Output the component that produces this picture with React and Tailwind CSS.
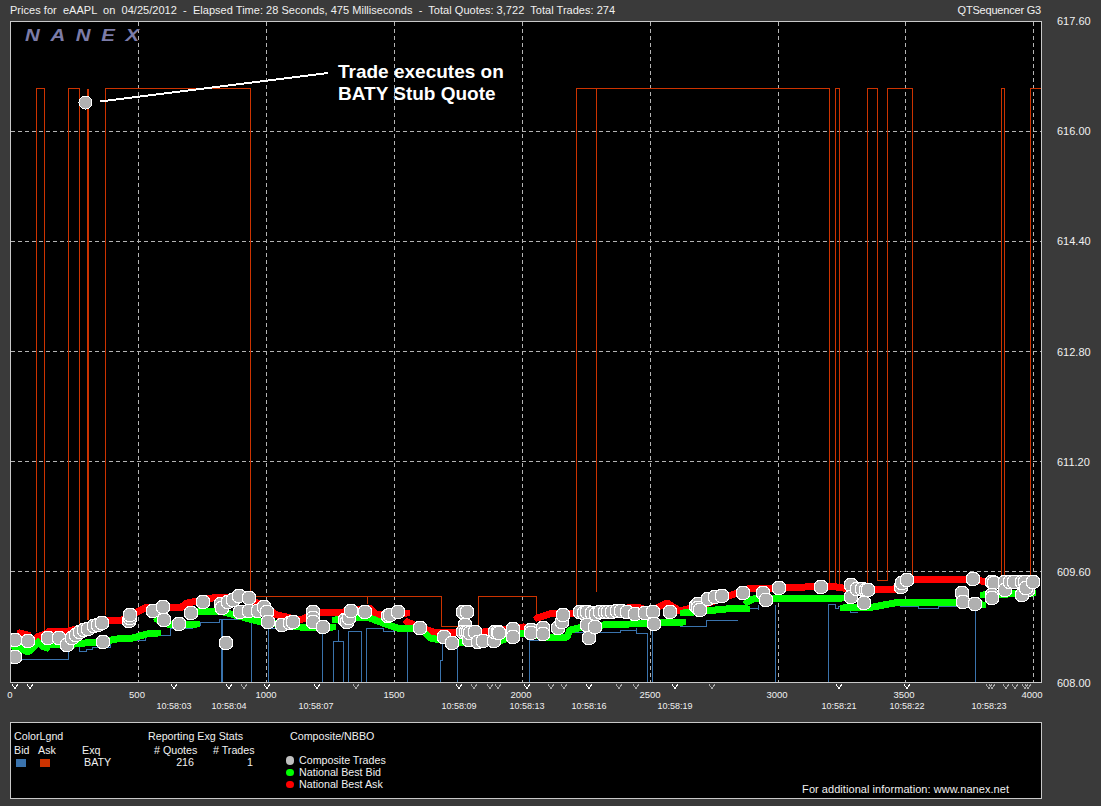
const font = { fontFamily: '"Liberation Sans", Arial, sans-serif' };

const M = (pts) => pts.map((p, i) => (i ? "L" : "M") + p[0] + " " + p[1]).join(" ");

const GRIDX = [138, 266, 394, 522, 650, 778, 905, 1033];
const GRIDY = [131, 241, 351, 461, 571];
const YLABELS = ["617.60", "616.00", "614.40", "612.80", "611.20", "609.60", "608.00"];
const XLABELS = [[0, 10], [500, 137], [1000, 266], [1500, 394], [2000, 521], [2500, 650], [3000, 777], [3500, 904], [4000, 1032]];
const TIMES = [["10:58:03", 174], ["10:58:04", 229], ["10:58:07", 316], ["10:58:09", 459], ["10:58:13", 527], ["10:58:16", 589], ["10:58:19", 675], ["10:58:21", 839], ["10:58:22", 907], ["10:58:23", 989]];
const MARKS = [15, 30, 174, 229, 244, 267, 317, 356, 459, 474, 490, 498, 527, 551, 564, 589, 619, 636, 675, 712, 839, 907, 989, 992, 1006, 1015, 1025, 1028];
const BRIGHT = [15, 30, 174, 229, 267, 317, 459, 527, 589, 675, 839, 907];

const ASK = [
  "M36.5 632 V88.5 H44.5 V632",
  "M68.5 630 V88.5 H79.5 V630",
  "M87.5 620 V88.5 M88.5 620 V88.5",
  "M105.5 615 V88.5 H250.5 V596.5 H441.5 V626.5 H478.5 V596.5 H536.5 V614",
  "M367.5 596.5 V604",
  "M576.5 612 V88.5 H829.5 V590",
  "M596.5 88.5 V591.5",
  "M835.5 590 V88.5 H839.5 V590",
  "M867.5 585 V88.5 H877.5 V580.5 H887.5 V88.5 H912.5 V580",
  "M1001.5 580 V88.5 H1004.5 V580",
  "M1030.5 580 V88.5 H1042",
];

const BID = [
  "M20 659.5 H68.5 V645 H79.5 V651.5 H86.5 V649.5 H92.5 V647.5 H110.5 V640.5 H145 V635 H170.5 V628.5 H192.5 V625.5 H200.5 V622 H219.5 V619.5 H250.5",
  "M222.5 682 V619.5 M221.5 682 V619.5",
  "M251.5 682 V619.5",
  "M268.5 682 V628.5 H290",
  "M322.5 682 V630",
  "M333.5 682 V641.5 H343.5 V682 M338.5 641.5 V629.5",
  "M348.5 682 V631.5 H361.5 V682",
  "M366.5 682 V628.5 H383.5 V631.5 H393.5 V630.5 H398",
  "M407.5 682 V628",
  "M440.5 682 V660.5 H442.5 V640.5 H457.5 V682",
  "M529.5 682 V640.5 H565 V632.5 H620 V630.5 H636.5 V627.5",
  "M636.5 627.5 V633.5 H647.5 V682",
  "M652.5 682 V628",
  "M680 626.5 H706.5 V620.5 H738",
  "M748 608.5 H758.5 V606 M758.5 610 V605",
  "M775.5 682 V605",
  "M828.5 682 V604.5 H835.5 V608.5 H838.5 V606.5 H845 V608.5 H850.5 V612.5 H858",
  "M900 606.5 H918 V608.5 H938 V606.5 H960",
  "M975.5 682 V606",
];

const RED = [
  [[20, 633], [28, 635]],
  [[37, 637], [43, 635], [50, 631], [68, 631], [80, 628], [110, 620], [122, 620], [137, 612], [147, 607], [180, 608], [187, 603], [203, 600], [217, 597], [240, 597], [257, 603], [277, 615], [300, 620], [320, 612], [343, 612], [370, 608], [377, 615], [407, 613]],
  [[407, 622], [433, 632], [483, 632], [523, 627]],
  [[537, 618], [553, 613], [577, 613], [637, 607], [650, 611], [667, 603], [680, 611], [703, 605], [737, 593], [750, 588], [780, 588], [830, 586], [843, 588], [893, 590], [900, 585], [910, 579], [970, 579], [987, 582], [1033, 582]],
];
const GREEN = [
  [[12, 646], [22, 649], [28, 652], [33, 648], [38, 642], [42, 646], [47, 648]],
  [[50, 644], [65, 645], [85, 643], [100, 642], [117, 639], [133, 638], [147, 634], [158, 633]],
  [[157, 619], [170, 625], [197, 624]],
  [[198, 611], [220, 611], [253, 620], [267, 623], [300, 627], [333, 627]],
  [[335, 620], [367, 617], [383, 623], [397, 628], [420, 628], [430, 638], [457, 643], [503, 640], [517, 633], [527, 633], [547, 638], [567, 637], [570, 630], [583, 627], [603, 625], [683, 622]],
  [[683, 613], [737, 608], [747, 609]],
  [[747, 602], [753, 599], [843, 598]],
  [[843, 608], [873, 607], [900, 602], [960, 602], [983, 605]],
  [[983, 595], [1033, 593]],
];

const DOTS = [
  [15, 640], [15, 657], [28, 641], [48, 638], [59, 638], [67, 645], [72, 638], [76, 635], [80, 632], [84, 630], [88, 629], [94, 626], [98, 625], [102, 623], [103, 642],
  [129, 621], [130, 618], [130, 615], [153, 611], [163, 607], [164, 620], [179, 624], [191, 613], [203, 602], [221, 604], [222, 608], [228, 602], [233, 600], [239, 596], [249, 598], [240, 612], [249, 611], [226, 643],
  [258, 611], [264, 607], [267, 612], [268, 622], [282, 625], [290, 623], [293, 622], [313, 612], [313, 618], [313, 622], [323, 627], [345, 620], [347, 622], [349, 618], [351, 611], [365, 612],
  [388, 616], [390, 615], [398, 612], [420, 628], [444, 637], [452, 643], [463, 612], [467, 612], [465, 625], [463, 632], [466, 632], [468, 632], [469, 640], [470, 633], [475, 632], [478, 642], [483, 641], [494, 641], [495, 632], [498, 632], [499, 633],
  [513, 629], [513, 637], [531, 630], [531, 633], [543, 628], [543, 634], [558, 628], [562, 622], [563, 615], [589, 638], [580, 612], [584, 613], [587, 612], [592, 613], [596, 614], [587, 625], [595, 627], [600, 612], [605, 612], [608, 612], [612, 612], [617, 611], [621, 611], [627, 612], [635, 614], [645, 613], [653, 612], [654, 624], [670, 612],
  [696, 606], [698, 604], [698, 608], [700, 610], [708, 599], [715, 597], [722, 596], [743, 593], [763, 593], [766, 600], [779, 588], [821, 587], [851, 585], [851, 597], [857, 589], [862, 589], [866, 590], [868, 590], [864, 603],
  [901, 587], [902, 583], [907, 580], [962, 593], [963, 602], [975, 604], [973, 579], [992, 582], [994, 583], [992, 595], [992, 598], [1005, 582], [1005, 590], [1010, 582], [1014, 582], [1022, 582], [1025, 582], [1028, 590], [1022, 595], [1026, 588], [1033, 582],
];

function Chart() {
  return (
    <svg width="1030" height="660" viewBox="11 22 1030 660" className="block" shapeRendering="crispEdges">
      <g stroke="#b4b4b4" strokeWidth="1" strokeDasharray="4 3" fill="none">
        {GRIDX.map((x) => <path key={x} d={`M${x + 0.5} 22 V682`} />)}
        {GRIDY.map((y) => <path key={y} d={`M11 ${y + 0.5} H1041`} />)}
      </g>
      <g fill="none" strokeWidth="1">
        {ASK.map((d, i) => <path key={i} d={d} stroke="#cc3300" />)}
        {BID.map((d, i) => <path key={i} d={d} stroke="#3a73ad" />)}
      </g>
      <g fill="none" stroke="#ff0000" strokeWidth="7" strokeLinecap="round" strokeLinejoin="round">
        {RED.map((p, i) => <path key={i} d={M(p)} />)}
      </g>
      <g fill="none" stroke="#00ff00" strokeWidth="7" strokeLinecap="round" strokeLinejoin="round">
        {GREEN.map((p, i) => <path key={i} d={M(p)} />)}
      </g>
      <g fill="#b0b0b0" stroke="#ffffff" strokeWidth="1">
        {DOTS.map(([x, y], i) => <circle key={i} cx={x} cy={y} r="7" />)}
        <circle cx="85.5" cy="102.5" r="6.5" />
      </g>
      <path d="M100 101.5 L328 73" stroke="#ffffff" strokeWidth="2" fill="none" />
    </svg>
  );
}

function Ticks() {
  return (
    <svg width="1101" height="7" viewBox="0 683 1101 7" className="absolute left-0 top-0 block" shapeRendering="crispEdges">
      {MARKS.map((x) => (
        <path key={x} d={`M${x - 3} 684 L${x} 689 L${x + 3} 684`} fill="none" stroke={BRIGHT.includes(x) ? "#ffffff" : "#a8a8a8"} strokeWidth="1" />
      ))}
    </svg>
  );
}

export default function App() {
  return (
    <div style={font} className="w-[1101px] h-[806px] bg-[#3a3a3a] text-white overflow-hidden flex flex-col text-[11px]">
      <div className="h-[21px] flex justify-between items-center pl-[10px] pr-[60px] text-[#f0f0f0] whitespace-pre">
        <span className="tracking-[0.03px]">Prices for  eAAPL  on  04/25/2012  -  Elapsed Time: 28 Seconds, 475 Milliseconds  -  Total Quotes: 3,722  Total Trades: 274</span>
        <span className="tracking-[-0.2px]">QTSequencer G3</span>
      </div>

      <div className="flex">
        <div className="relative ml-[10px] w-[1032px] h-[662px] border border-[#c8c8c8] bg-black">
          <Chart />
          <div style={{ color: "#7c7ca8" }} className="absolute left-[14px] top-[4px] text-[17px] leading-[20px] font-bold italic tracking-[8.9px] origin-left scale-x-[1.2]">NANEX</div>
          <div className="absolute left-[327px] top-[39px] text-[19px] leading-[22px] font-bold whitespace-nowrap">
            <div>Trade executes on</div>
            <div>BATY Stub Quote</div>
          </div>
        </div>
        <div className="flex flex-col justify-between h-[662px] pl-[15px] text-[#f0f0f0]">
          {YLABELS.map((l) => (
            <div key={l} className="h-0 flex items-center">{l}</div>
          ))}
        </div>
      </div>

      <div className="relative h-[39px] text-[9.5px] text-[#f0f0f0]">
        <Ticks />
        {XLABELS.map(([l, x]) => (
          <span key={l} style={{ left: x }} className="absolute top-[6px] -translate-x-1/2 leading-[12px]">{l}</span>
        ))}
        {TIMES.map(([l, x]) => (
          <span key={l} style={{ left: x }} className="absolute top-[17px] -translate-x-1/2 leading-[12px] text-[9px]">{l}</span>
        ))}
      </div>

      <div className="relative ml-[10px] w-[1032px] h-[77px] border border-[#c8c8c8] bg-black flex text-[10.7px] text-[#f0f0f0] leading-[12px]">
        <div className="w-[137px] pl-[3px] pt-[7px] flex flex-col">
          <div>ColorLgnd</div>
          <div className="flex mt-[2px]">
            <span className="w-[24px]">Bid</span>
            <span className="w-[44px]">Ask</span>
            <span>Exq</span>
          </div>
          <div className="flex mt-[0px]">
            <span className="w-[10px] h-[8px] bg-[#3a73ad] ml-[2px] mt-[3px]" />
            <span className="w-[10px] h-[8px] bg-[#cc3300] ml-[14px] mt-[3px]" />
            <span className="ml-[34px]">BATY</span>
          </div>
        </div>
        <div className="w-[142px] pt-[7px] flex flex-col">
          <div>Reporting Exg Stats</div>
          <div className="flex mt-[2px] pl-[6px]">
            <span className="w-[59px]"># Quotes</span>
            <span># Trades</span>
          </div>
          <div className="flex">
            <span className="w-[46px] text-right">216</span>
            <span className="w-[59px] text-right">1</span>
          </div>
        </div>
        <div className="pt-[7px] flex flex-col">
          <div>Composite/NBBO</div>
          <div className="mt-[12px] flex flex-col">
            <div className="flex items-center ml-[-4px]"><span className="w-[8px] h-[9px] rounded-full bg-[#c0c0c0] mr-[5px]" />Composite Trades</div>
            <div className="flex items-center ml-[-4px]"><span className="w-[8px] h-[7px] rounded-full bg-[#00ff00] mr-[5px]" />National Best Bid</div>
            <div className="flex items-center ml-[-4px]"><span className="w-[8px] h-[7px] rounded-full bg-[#ff0000] mr-[5px]" />National Best Ask</div>
          </div>
        </div>
        <div className="absolute right-[32px] bottom-[3px] text-[11px] tracking-[0.05px]">For additional information: www.nanex.net</div>
      </div>
    </div>
  );
}
